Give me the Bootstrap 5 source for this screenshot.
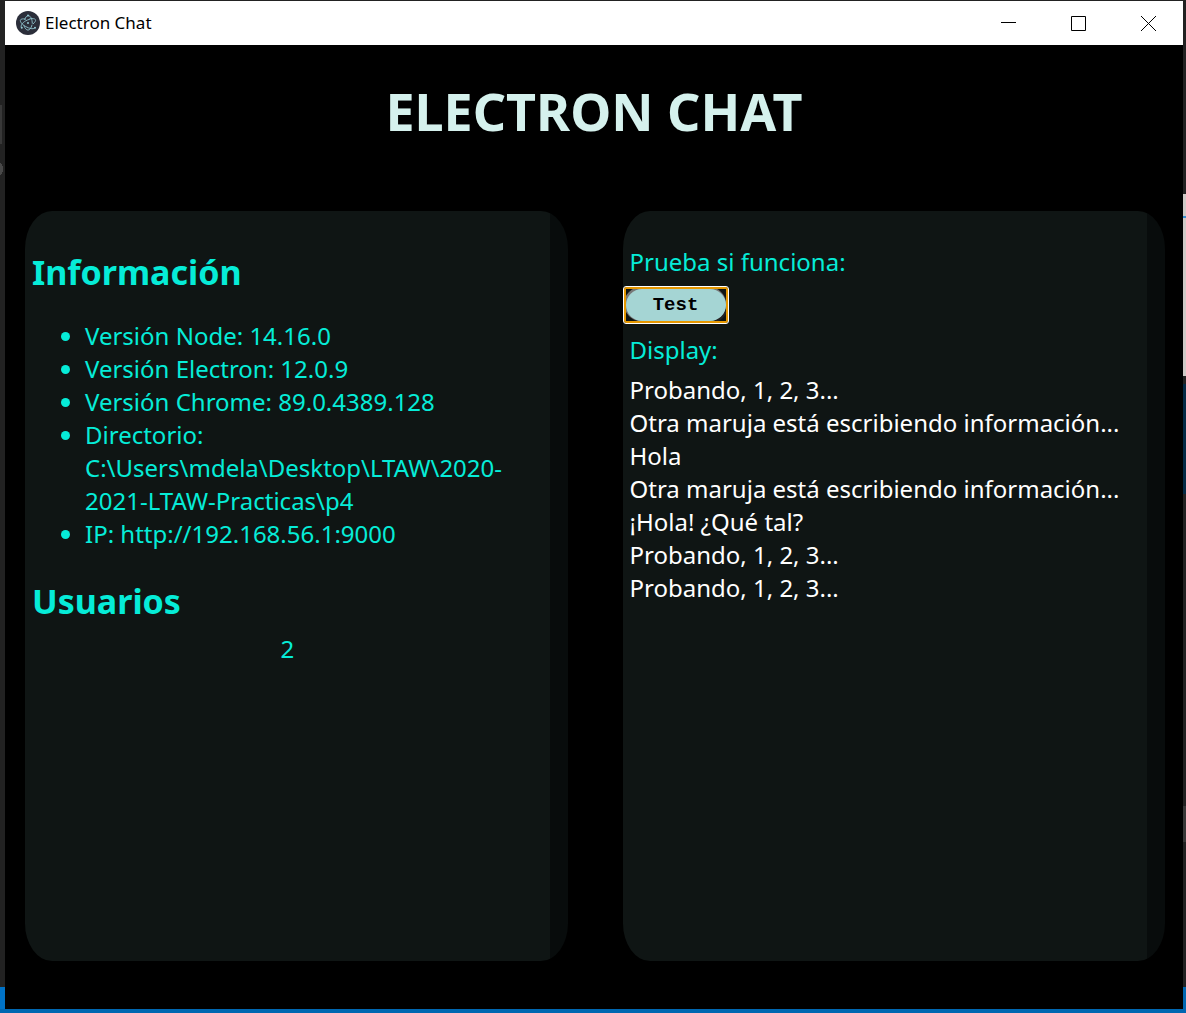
<!DOCTYPE html>
<html lang="es">
<head>
<meta charset="utf-8">
<meta name="viewport" content="width=device-width, initial-scale=1">
<title>Electron Chat</title>
<link rel="stylesheet" href="https://cdn.jsdelivr.net/npm/bootstrap@5.3.0/dist/css/bootstrap.min.css">
<style>
  body {
    padding: 1px 3px 4px 5px;
    font-family: "Comic Sans MS", "Noto Sans", sans-serif;
    font-size: 24px;
    line-height: 33px;
    color: #06ecd8;
    background:
      linear-gradient(#0067b1, #0067b1) left bottom / 100% 4px no-repeat,
      linear-gradient(#0072c6, #0072c6) left bottom / 5px 26px no-repeat,
      linear-gradient(#0067b1, #0067b1) right bottom / 3px 26px no-repeat,
      linear-gradient(#383838, #383838) 0 105px / 2px 39px no-repeat,
      radial-gradient(circle at -6px 9px, #484848 9px, transparent 9px) 0 160px / 5px 18px no-repeat,
      linear-gradient(#3b8fd0, #3b8fd0) right 0 top 216px / 3px 2px no-repeat,
      linear-gradient(#cfcac7, #cfcac7) right 0 top 194px / 3px 182px no-repeat,
      linear-gradient(#042a45, #042a45) right 0 top 384px / 3px 110px no-repeat,
      linear-gradient(#383838, #383838) right 0 top 806px / 3px 36px no-repeat,
      #222;
  }
  .titlebar { height: 44px; font-family: "Noto Sans", sans-serif; font-size: 17px; line-height: 24px; padding-left: 11px; }
  .app-name { padding-left: 5px; }
  .win-btn { width: 70px; height: 44px; }
  .heading { color: #d5f1ed; font-size: 52px; line-height: 70px; padding: 31px 0 65px; }
  .panels { gap: 55px; padding: 0 18px 48px 20px; }
  .panel {
    flex: 1 1 0; min-width: 0; padding: 34px 25px 0 7px; overflow: hidden;
    background: linear-gradient(#080c0c, #080c0c) right / 18px 100% no-repeat, #0f1514;
    border-radius: 5% / 5%;
  }
  .panel h2 { font-size: 34px; line-height: 54px; font-weight: 700; margin-bottom: 20px; }
  .panel ul { padding-left: 53px; margin-bottom: 24px; }
  .panel .users-title { margin-bottom: 4px; }
  .test-btn {
    width: 100px; height: 32px; margin: 11px 0 12px -4px; padding: 0;
    border: 0; border-radius: 16px; background: #a5d5d4; color: #000;
    font: bold 19px/32px "Liberation Mono", monospace;
    box-shadow: -1px -1px 0 1px #777, 1px 1px 0 1px #222;
    position: relative;
  }
  .test-btn::after { content: ""; position: absolute; inset: -2px; border: 2px solid #e59700; outline: 1px solid #fff; border-radius: 2px; }
  .messages { color: #fff; margin-top: 7px; }
</style>
<script src="https://cdn.jsdelivr.net/npm/bootstrap@5.3.0/dist/js/bootstrap.bundle.min.js"></script>
</head>
<body class="d-flex flex-column min-vh-100">
<header class="titlebar d-flex align-items-center bg-white text-black">
  <svg width="24" height="24" viewBox="0 0 24 24" fill="none" stroke="#94c9d3" stroke-width="1" aria-hidden="true">
    <circle cx="12" cy="12" r="12" fill="#2b2e3a" stroke="none"/>
    <g stroke-linecap="round" stroke-opacity=".85">
      <path d="M9.500 8.100C6.500 7.500 5 8 4.500 8.900c-.9 1.600 1.500 4.500 5.300 6.700 3.700 2.100 7.300 2.800 8.600 1.700"/>
      <path d="M13.800 7.800c2.800-.5 5-.2 5.600.8.600 1-.3 2.600-2.100 4.100"/>
      <path d="M7.900 14.600c.9 2.700 2.500 4.500 4.100 4.500 1.700 0 3.200-2 4-5"/>
      <path d="M16.300 12.300C16.300 8 14.500 4.700 12.300 4.700c-1.500 0-2.800 1.500-3.600 3.700"/>
      <path d="M13.500 8.300c-1.200.3-2.500.8-3.900 1.600C6.200 11.900 4.500 14.500 5.200 16.300"/>
    </g>
    <circle cx="12" cy="12" r="1" fill="#94c9d3" stroke="none"/>
    <circle cx="5.800" cy="16.700" r="1" fill="#94c9d3" stroke="none"/>
    <circle cx="19" cy="16.700" r="1" fill="#94c9d3" stroke="none"/>
    <circle cx="12" cy="4.600" r="1" fill="#94c9d3" stroke="none"/>
  </svg>
  <span class="app-name me-auto">Electron Chat</span>
  <button type="button" class="win-btn btn p-0 rounded-0 border-0 d-flex align-items-center justify-content-center" aria-label="Minimizar"><svg width="15" height="15"><path d="M0 6.500H15" stroke="#000"/></svg></button>
  <button type="button" class="win-btn btn p-0 rounded-0 border-0 d-flex align-items-center justify-content-center" aria-label="Maximizar"><svg width="15" height="15"><path d="M.5.5H14.500V14.500H.5Z" fill="none" stroke="#000"/></svg></button>
  <button type="button" class="win-btn btn p-0 rounded-0 border-0 d-flex align-items-center justify-content-center" aria-label="Cerrar"><svg width="15" height="15"><path d="M0 0 15 15M15 0 0 15" stroke="#000"/></svg></button>
</header>
<main class="d-flex flex-column flex-grow-1 bg-black">
  <h1 class="heading text-center fw-bold m-0">ELECTRON CHAT</h1>
  <div class="panels d-flex flex-grow-1">
    <section class="panel">
      <h2>Información</h2>
      <ul>
        <li>Versión Node: 14.16.0</li>
        <li>Versión Electron: 12.0.9</li>
        <li>Versión Chrome: 89.0.4389.128</li>
        <li>Directorio: C:\Users\mdela\Desktop\LTAW\2020-<wbr>2021-LTAW-Practicas\p4</li>
        <li>IP: http://192.168.56.1:9000</li>
      </ul>
      <h2 class="users-title">Usuarios</h2>
      <p class="text-center mb-0">2</p>
    </section>
    <section class="panel">
      <p class="mb-0">Prueba si funciona:</p>
      <button type="button" class="test-btn d-block">Test</button>
      <p class="mb-0">Display:</p>
      <div class="messages">
        <div>Probando, 1, 2, 3...</div>
        <div>Otra maruja está escribiendo información...</div>
        <div>Hola</div>
        <div>Otra maruja está escribiendo información...</div>
        <div>¡Hola! ¿Qué tal?</div>
        <div>Probando, 1, 2, 3...</div>
        <div>Probando, 1, 2, 3...</div>
      </div>
    </section>
  </div>
</main>
</body>
</html>
